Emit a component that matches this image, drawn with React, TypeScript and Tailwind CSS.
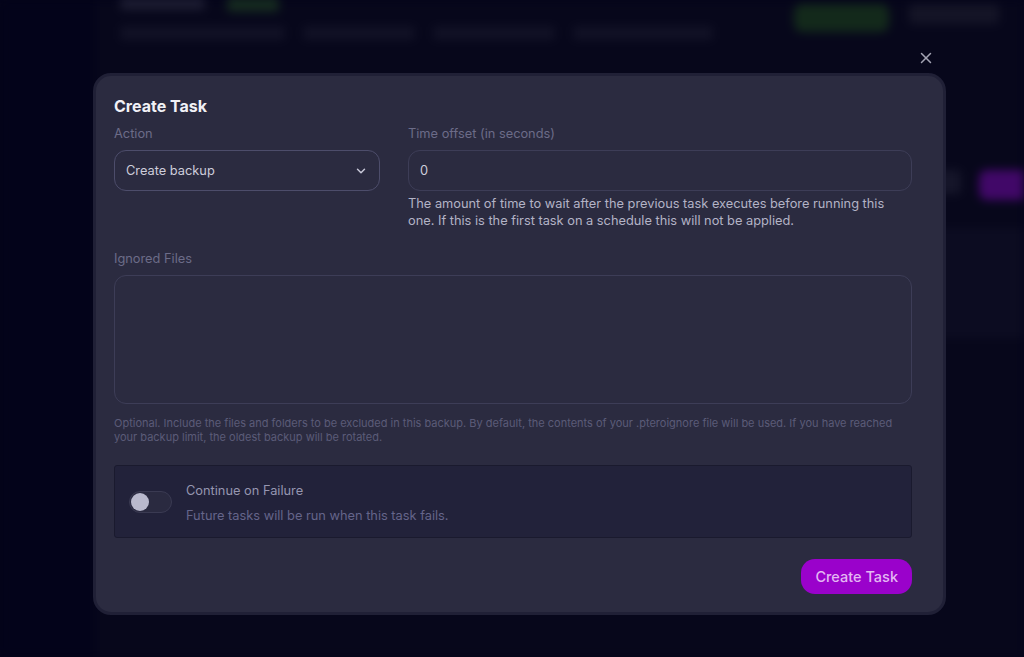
import { ChevronDown, X } from 'lucide-react'

function Backdrop() {
  // Blurred schedule page behind the modal.
  return (
    <div className="absolute inset-0 flex blur-[5px]">
      <div className="w-[95px] shrink-0 bg-[#04041a]" />
      <div className="flex-1 bg-[#0a0a1c]">
        <div className="flex items-start justify-between px-[25px] pt-0">
          <div className="flex flex-col gap-[14px]">
            <div className="flex gap-[22px]">
              <div className="h-[12px] w-[85px] -mt-[2px] rounded bg-[#26263a]" />
              <div className="h-[14px] w-[52px] -mt-[2px] rounded bg-[#1d3a22]" />
            </div>
            <div className="flex gap-[18px]">
              <div className="h-[14px] w-[165px] rounded bg-[#18182a]" />
              <div className="h-[14px] w-[112px] rounded bg-[#18182a]" />
              <div className="h-[14px] w-[122px] rounded bg-[#18182a]" />
              <div className="h-[14px] w-[140px] rounded bg-[#18182a]" />
            </div>
          </div>
          <div className="flex gap-[20px] pt-[4px]">
            <div className="h-[28px] w-[95px] rounded-lg bg-[#1a3a1c]" />
            <div className="h-[20px] w-[90px] rounded bg-[#1c1c2c]" />
          </div>
        </div>
        <div className="mt-[130px] flex justify-end gap-[18px]">
          <div className="h-[24px] w-[26px] rounded bg-[#1e1e30]" />
          <div className="h-[30px] w-[45px] rounded-l-lg bg-[#5c0b8a]" />
        </div>
        <div className="mt-[28px] ml-auto h-[110px] w-[90px] bg-[#111124]" />
      </div>
      <div className="absolute inset-0 bg-[#04041a]/30" />
    </div>
  )
}

export default function App() {
  return (
    <div className="relative h-[657px] w-[1024px] overflow-hidden bg-[#04041a] font-['Inter',sans-serif]">
      <Backdrop />
      <div className="relative flex flex-col items-end pl-[93px] pr-[78px] pt-[49px]">
        <button className="mr-[11px] mb-[6px] text-[#a3a3b3]">
          <X size={18} strokeWidth={2} />
        </button>
        <div className="w-[853px] h-[542px] rounded-[18px] border-[3px] border-[#202036] bg-[#2b2b40] pl-[18px] pr-[31px] pt-[18px]">
          <h2 className="text-[16px] font-bold leading-[24px] text-[#f1f1f6]">Create Task</h2>
          <div className="mt-[6px] grid grid-cols-[266px_1fr] gap-x-[28px]">
            <div>
              <label className="block text-[12.8px] leading-[20px] text-[#6c6c88]">Action</label>
              <div className="mt-[6px] flex h-[41px] items-center justify-between rounded-[12px] border border-[#4d4d6b] px-[11px] text-[12.8px] text-[#cdcddb]">
                <span>Create backup</span>
                <ChevronDown size={14} strokeWidth={2.5} className="text-[#c8c8d8]" />
              </div>
            </div>
            <div>
              <label className="block text-[12.8px] leading-[20px] text-[#6c6c88]">Time offset (in seconds)</label>
              <div className="mt-[6px] flex h-[41px] items-center rounded-[12px] border border-[#3d3d57] px-[11px] text-[12.8px] text-[#cdcddb]">
                0
              </div>
              <p className="mt-[4px] text-[12.8px] leading-[17px] text-[#b3b3c6]">
                The amount of time to wait after the previous task executes before running this one. If this is the first task on a schedule this will not be applied.
              </p>
            </div>
          </div>
          <label className="mt-[20px] block text-[12.8px] leading-[20px] text-[#6c6c88]">Ignored Files</label>
          <div className="mt-[6px] h-[129px] rounded-[12px] border border-[#3d3d57]" />
          <p className="mt-[12px] text-[11px] leading-[14px] text-[#5b5b78]">
            Optional. Include the files and folders to be excluded in this backup. By default, the contents of your .pteroignore file will be used. If you have reached your backup limit, the oldest backup will be rotated.
          </p>
          <div className="mt-[21px] flex h-[73px] items-start gap-[14px] rounded-[3px] border border-[#1a1a2e] bg-[#22223a] px-[14px] pt-[17px]">
            <div className="mt-[8px] flex h-[22px] w-[43px] items-center rounded-full border border-[#3a3a52] bg-[#2a2a40] px-[1px]">
              <div className="h-[18px] w-[18px] rounded-full bg-[#b9b9cd]" />
            </div>
            <div>
              <p className="text-[12.8px] leading-[16px] text-[#9696b0]">Continue on Failure</p>
              <p className="mt-[9px] text-[12.8px] leading-[16px] text-[#65658a]">Future tasks will be run when this task fails.</p>
            </div>
          </div>
          <div className="mt-[21px] flex justify-end">
            <button className="h-[35px] rounded-[14px] bg-[#9a02cb] px-[14px] text-[14.5px] font-medium text-[#e3b8f3]">
              Create Task
            </button>
          </div>
        </div>
      </div>
    </div>
  )
}
